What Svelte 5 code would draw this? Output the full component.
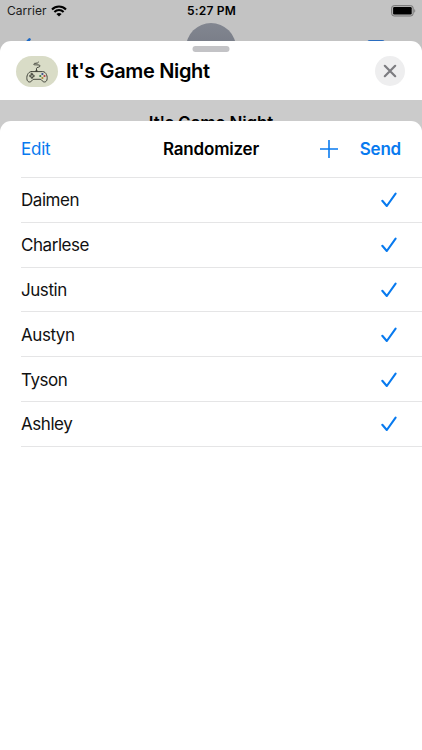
<script lang="ts">
	let people = $state([
		{ name: 'Daimen', selected: true },
		{ name: 'Charlese', selected: true },
		{ name: 'Justin', selected: true },
		{ name: 'Austyn', selected: true },
		{ name: 'Tyson', selected: true },
		{ name: 'Ashley', selected: true },
	]);

	function toggle(i: number) {
		people[i].selected = !people[i].selected;
	}
</script>

<div class="screen">
	<!-- Dimmed conversation behind the sheets -->
	<div class="backdrop">
		<div class="status-bar">
			<div class="status-left">
				<span class="carrier">Carrier</span>
				<svg class="wifi" width="16" height="12" viewBox="0 0 16 12" aria-hidden="true">
					<path d="M1 4.4a10 10 0 0 1 14 0" />
					<path d="M3.4 6.9a6.6 6.6 0 0 1 9.2 0" />
					<path class="dot" d="M5.4 9.1a3.8 3.8 0 0 1 5.2 0L8 11.6z" />
				</svg>
			</div>
			<span class="time">5:27 PM</span>
			<svg class="battery" width="25" height="12" viewBox="0 0 25 12" aria-hidden="true">
				<rect x="0.6" y="0.6" width="21.6" height="10.4" rx="2.6" fill="#b5b5b5" stroke="#777" />
				<rect x="2.1" y="2.1" width="18.6" height="7.4" rx="1.2" fill="#000" />
				<path d="M23.3 4v3.8c1.3-.6 1.3-3.2 0-3.8z" fill="#777" />
			</svg>
		</div>
		<div class="nav-peek">
			<svg class="back" width="10" height="18" viewBox="0 0 10 18" aria-hidden="true">
				<path d="M8.5 1.4 1.5 9l7 7.6" />
			</svg>
			<div class="avatar"></div>
			<div class="video"></div>
		</div>
	</div>

	<div class="sheet">
		<header class="app-header">
			<div class="grabber"></div>
			<div class="app-icon">
				<svg width="42" height="32" viewBox="0 0 42 32" aria-hidden="true">
					<g fill="none" stroke="#42443b" stroke-width="1" stroke-linecap="round" stroke-linejoin="round">
						<path d="M20.5 15.5v-3.2c0-1.4 3.5-.6 3.5-2.4 0-1.9-6.5-.2-6.3-1.8.2-1.5 4.2 0 4.9-1.9" />
						<path d="M15.3 15.6h11.4c3.6 0 5.2 5.3 4.2 8.4-.8 2.6-3.7 2.6-5.1.3-.5-.8-.9-1-1.7-1h-6.2c-.8 0-1.2.2-1.7 1-1.4 2.3-4.3 2.3-5.1-.3-1-3.1.6-8.4 4.2-8.4z" />
						<path d="M15.3 17.7h1.3v1.5h1.5v1.5h-1.5v1.5h-1.3v-1.5h-1.5v-1.5h1.5z" />
					</g>
					<path d="M19.2 14.4h2.6v1.4h-2.6z" fill="#42443b" />
					<circle cx="26.4" cy="18" r="1.1" fill="#34488a" />
					<circle cx="24.3" cy="20" r="1.1" fill="#347b48" />
					<circle cx="28.5" cy="20" r="1.1" fill="#b23d43" />
					<circle cx="26.4" cy="22" r="1.1" fill="#a9892e" />
				</svg>
			</div>
			<h1>It's Game Night</h1>
			<button class="close" aria-label="Close">
				<svg width="14" height="14" viewBox="0 0 14 14" aria-hidden="true">
					<path d="M1.8 1.8l10.4 10.4M12.2 1.8 1.8 12.2" />
				</svg>
			</button>
		</header>

		<div class="app-body">
			<div class="under-title">It's Game Night</div>

			<section class="randomizer">
				<div class="toolbar">
					<button class="edit">Edit</button>
					<h2>Randomizer</h2>
					<div class="actions">
						<button class="add" aria-label="Add">
							<svg width="18" height="18" viewBox="0 0 18 18" aria-hidden="true">
								<path d="M9 .5v17M.5 9h17" />
							</svg>
						</button>
						<button class="send">Send</button>
					</div>
				</div>

				<ul>
					{#each people as person, i (person.name)}
						<li>
							<button class="row" onclick={() => toggle(i)}>
								<span>{person.name}</span>
								{#if person.selected}
									<svg class="check" width="16" height="16" viewBox="0 0 16 16" aria-hidden="true">
										<path d="M1.3 8.8 5.8 14 14.6 1.6" />
									</svg>
								{/if}
							</button>
						</li>
					{/each}
				</ul>
			</section>
		</div>
	</div>
</div>

<style>
	:global(body) {
		margin: 0;
		overflow: hidden;
	}

	.screen {
		display: flex;
		flex-direction: column;
		height: 100vh;
		overflow: hidden;
		background: #c3c3c3;
		color: #000;
		font-family: Inter, 'Liberation Sans', sans-serif;
	}

	button {
		padding: 0;
		border: none;
		background: none;
		color: #087aef;
		font: inherit;
		cursor: pointer;
	}

	svg { display: block; }

	h1, h2 {
		margin: 0;
		font-weight: 600;
		white-space: nowrap;
	}

	.backdrop {
		flex: none;
		height: 41px;
		overflow: hidden;
	}

	.status-bar {
		display: grid;
		grid-template-columns: 1fr auto 1fr;
		align-items: center;
		height: 21px;
		padding: 0 6px 0 7px;
	}

	.status-left {
		display: flex;
		align-items: center;
		gap: 4px;
	}

	.carrier {
		font-size: 12px;
		letter-spacing: 0.05px;
		color: #1c1c1c;
	}

	.wifi {
		fill: none;
		stroke: #000;
		stroke-width: 2.1;
	}

	.wifi .dot {
		fill: #000;
		stroke: none;
	}

	.time {
		font-size: 12px;
		font-weight: 600;
		letter-spacing: 0.2px;
	}

	.battery {
		justify-self: end;
	}

	.nav-peek {
		display: grid;
		grid-template-columns: 1fr auto 1fr;
		align-items: start;
		padding: 2px 21px 0;
	}

	.back {
		margin-top: 15px;
		fill: none;
		stroke: #1c68c4;
		stroke-width: 2.6;
		stroke-linecap: round;
	}

	.avatar {
		width: 50px;
		height: 50px;
		border-radius: 50%;
		background: linear-gradient(#828690, #6d727d);
	}

	.video {
		justify-self: end;
		width: 18px;
		height: 14px;
		margin: 17px 16px 0 0;
		border-radius: 3px;
		background: #2a6dc0;
	}

	.sheet {
		display: flex;
		flex: 1;
		flex-direction: column;
		overflow: hidden;
		border-radius: 11px 11px 0 0;
		background: #fff;
	}

	.app-header {
		position: relative;
		display: flex;
		flex: none;
		align-items: center;
		box-sizing: border-box;
		height: 59px;
		padding: 1px 17px 0 16px;
	}

	.grabber {
		position: absolute;
		top: 5px;
		left: 50%;
		width: 37px;
		height: 6px;
		border-radius: 3px;
		background: #c3c3c6;
		transform: translateX(-50%);
	}

	.app-icon {
		width: 42px;
		height: 31px;
		overflow: hidden;
		border-radius: 16px;
		background: #d9dcc7;
	}

	h1 {
		flex: 1;
		margin-left: 8px;
		font-size: 20px;
		letter-spacing: -0.35px;
	}

	.close {
		display: grid;
		place-items: center;
		width: 30px;
		height: 30px;
		border-radius: 50%;
		background: #eeeeef;
	}

	.close path {
		stroke: #7c7c80;
		stroke-width: 2.2;
		stroke-linecap: round;
	}

	.app-body {
		display: flex;
		flex: 1;
		flex-direction: column;
		background: #cbcbcb;
	}

	.under-title {
		flex: none;
		box-sizing: border-box;
		height: 21px;
		padding-top: 13px;
		overflow: hidden;
		font-size: 17px;
		font-weight: 600;
		letter-spacing: -0.15px;
		line-height: 20px;
		text-align: center;
	}

	.randomizer {
		flex: 1;
		border-radius: 11px 11px 0 0;
		background: #fff;
		font-size: 17px;
	}

	.toolbar {
		display: grid;
		grid-template-columns: 1fr auto 1fr;
		align-items: center;
		height: 56px;
		padding: 0 21px;
	}

	.edit {
		justify-self: start;
		letter-spacing: -0.25px;
	}

	h2 {
		font-size: 17px;
		letter-spacing: -0.2px;
	}

	.actions {
		display: flex;
		align-items: center;
		justify-content: flex-end;
		gap: 22px;
	}

	.add path {
		stroke: #087aef;
		stroke-width: 1.6;
		stroke-linecap: round;
	}

	.send {
		font-weight: 600;
		letter-spacing: -0.2px;
	}

	ul {
		margin: 0 0 0 21px;
		padding: 0;
		border-top: 1px solid #e5e5e6;
		list-style: none;
	}

	li {
		box-sizing: border-box;
		height: 44.8px;
		border-bottom: 1px solid #e5e5e6;
	}

	.row {
		display: flex;
		align-items: center;
		justify-content: space-between;
		width: 100%;
		height: 100%;
		padding: 1px 25px 0 0;
		color: #111;
		letter-spacing: -0.45px;
	}

	.check path {
		fill: none;
		stroke: #087aef;
		stroke-width: 2.1;
		stroke-linecap: round;
		stroke-linejoin: round;
	}
</style>
